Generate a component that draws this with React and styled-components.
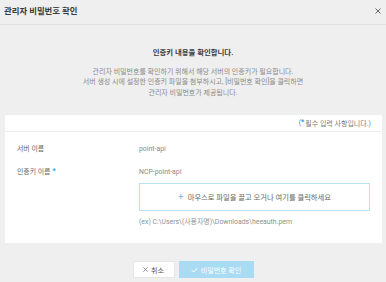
import React from "react";
import styled, { createGlobalStyle } from "styled-components";

const Global = createGlobalStyle`
  html, body {
    margin: 0;
    padding: 0;
    background: #efefef;
  }
  body {
    font-family: Roboto, "Noto Sans CJK KR", sans-serif;
    color: #555;
  }
`;

const Dialog = styled.div`
  width: 386px;
  height: 282px;
  display: flex;
  flex-direction: column;
  overflow: hidden;
`;

const Header = styled.div`
  height: 24px;
  border-bottom: 1px solid #e0e0e0;
  display: flex;
  align-items: center;
  justify-content: space-between;
  padding: 0 5px 0 4px;
`;

const Title = styled.h1`
  margin: 0;
  font-size: 8.4px;
  font-weight: 700;
  color: #3a3a3a;
  line-height: 10px;
  margin-top: -3px;
`;

const Close = styled.button`
  border: 0;
  background: none;
  padding: 0;
  width: 6px;
  height: 6px;
  display: flex;
  margin-top: -2px;
`;

const Intro = styled.div`
  padding-top: 23px;
  text-align: center;
`;

const Heading = styled.h2`
  margin: 0;
  font-size: 7.4px;
  font-weight: 700;
  line-height: 10px;
  color: #3a3a3a;
`;

const Desc = styled.p`
  margin: 9px 0 0;
  font-size: 7px;
  line-height: 10.4px;
  color: #8a8a8a;
`;

const Panel = styled.div`
  margin: 17px 4px 0 5px;
  background: #fff;
  padding-bottom: 16px;
`;

const PanelTop = styled.div`
  height: 16px;
  border-bottom: 1px solid #ececec;
  display: flex;
  align-items: center;
  justify-content: flex-end;
  padding-right: 11px;
  font-size: 7px;
  color: #7a7a7a;
`;

const Star = styled.span`
  color: #2a9ee0;
  font-weight: 700;
  font-size: 7px;
  position: relative;
  top: -1px;
  margin: ${p => (p.$after ? "0 1px 0 0" : "0 0 0 2px")};
`;

const Rows = styled.div`
  padding: 12px 12px 0;
  display: flex;
  flex-direction: column;
  gap: 13px;
`;

const Row = styled.div`
  display: grid;
  grid-template-columns: 122px 1fr;
  align-items: start;
`;

const Label = styled.div`
  font-size: 6.9px;
  line-height: 10px;
  color: #666;
`;

const Value = styled.div`
  font-size: 6.9px;
  line-height: 10px;
  color: #8a8a8a;
`;

const Drop = styled.div`
  margin: 6px 0 0;
  height: 28px;
  box-sizing: border-box;
  border: 1px solid #b7e2f6;
  display: flex;
  align-items: center;
  justify-content: center;
  gap: 4px;
  font-size: 7.3px;
  color: #666;
`;

const Plus = styled.span`
  color: #2a9ee0;
  font-size: 10px;
  line-height: 10px;
  font-weight: 300;
`;

const Hint = styled.div`
  margin-top: 6px;
  font-size: 6.9px;
  line-height: 10px;
  color: #909090;
`;

const Footer = styled.div`
  margin-top: 18px;
  display: flex;
  justify-content: center;
  gap: 4px;
`;

const Button = styled.button`
  height: 17px;
  padding: 0;
  width: ${p => p.$w}px;
  border: 0;
  font-family: inherit;
  font-size: 7px;
  display: flex;
  align-items: center;
  justify-content: center;
  gap: 3px;
  background: ${p => (p.$primary ? "#a9dbf2" : "#fff")};
  color: ${p => (p.$primary ? "#fff" : "#555")};
  border: 1px solid ${p => (p.$primary ? "#a9dbf2" : "#e6e6e6")};
`;

const XIcon = ({ size = 6, color = "#666" }) => (
  <svg width={size} height={size} viewBox="0 0 6 6">
    <path d="M0.5 0.5L5.5 5.5M5.5 0.5L0.5 5.5" stroke={color} strokeWidth="1" />
  </svg>
);

const CheckIcon = () => (
  <svg width="7" height="6" viewBox="0 0 7 6">
    <path d="M0.6 3L2.6 5L6.4 1" stroke="#fff" strokeWidth="1" fill="none" />
  </svg>
);

export default function App() {
  return (
    <Dialog>
      <Global />
      <Header>
        <Title>관리자 비밀번호 확인</Title>
        <Close aria-label="close">
          <XIcon />
        </Close>
      </Header>
      <Intro>
        <Heading>인증키 내용을 확인합니다.</Heading>
        <Desc>
          관리자 비밀번호를 확인하기 위해서 해당 서버의 인증키가 필요합니다.
          <br />
          서버 생성 시에 설정한 인증키 파일을 첨부하시고, [비밀번호 확인]을 클릭하면
          <br />
          관리자 비밀번호가 제공됩니다.
        </Desc>
      </Intro>
      <Panel>
        <PanelTop>
          (<Star $after>*</Star>필수 입력 사항입니다.)
        </PanelTop>
        <Rows>
          <Row>
            <Label>서버 이름</Label>
            <Value>point-api</Value>
          </Row>
          <Row>
            <Label>
              인증키 이름<Star>*</Star>
            </Label>
            <div>
              <Value>NCP-point-api</Value>
              <Drop>
                <Plus>+</Plus>
                마우스로 파일을 끌고 오거나 여기를 클릭하세요
              </Drop>
              <Hint>(ex) C:\Users\(사용자명)\Downloads\heeauth.pem</Hint>
            </div>
          </Row>
        </Rows>
      </Panel>
      <Footer>
        <Button $w={42}>
          <XIcon size={5} color="#777" />
          취소
        </Button>
        <Button $w={75} $primary>
          <CheckIcon />
          비밀번호 확인
        </Button>
      </Footer>
    </Dialog>
  );
}
